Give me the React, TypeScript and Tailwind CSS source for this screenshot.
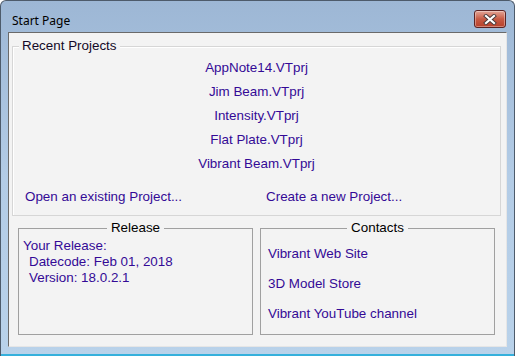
import React from 'react';

const projects = ['AppNote14.VTprj', 'Jim Beam.VTprj', 'Intensity.VTprj', 'Flat Plate.VTprj', 'Vibrant Beam.VTprj'];
const contacts = ['Vibrant Web Site', '3D Model Store', 'Vibrant YouTube channel'];

function CloseButton() {
    return (
        <div className="w-[32px] h-[18px] mt-[9px] mr-[8px] rounded-[3px] border border-[#5b2323] bg-gradient-to-b from-[#e3a597] via-[#c75a44] to-[#b7402a] flex items-center justify-center shadow-[inset_0_0_0_1px_rgba(255,255,255,0.35)]">
            <svg width="14" height="11" viewBox="0 0 14 11">
                <path d="M3 2 L11 9 M11 2 L3 9" stroke="#4a3a3a" strokeWidth="4" strokeLinecap="square" />
                <path d="M3 2 L11 9 M11 2 L3 9" stroke="#ffffff" strokeWidth="2.2" strokeLinecap="square" />
            </svg>
        </div>
    );
}

export default function App() {
    return (
        <div
            className="w-[515px] h-[356px] flex flex-col rounded-t-[6px] border border-b-0 border-[#4d5b6b] bg-gradient-to-b from-[#9db7d5] via-[#b3cce6] to-[#b9d2ea] overflow-hidden"
            style={{ fontFamily: "'Liberation Sans', Arial, sans-serif" }}
        >
            {/* title bar */}
            <div className="h-[31px] flex-none flex justify-between">
                <span className="pl-[11px] pt-[12px] text-[12px] leading-[16px] text-black" style={{ fontFamily: "'Noto Sans', sans-serif" }}>
                    Start Page
                </span>
                <CloseButton />
            </div>

            {/* client area */}
            <div className="mx-[7px] h-[315px] flex-none flex flex-col border border-t-[#6a6a6a] border-l-[#6a6a6a] border-r-[#e6e6e6] border-b-[#e6e6e6] bg-[#f3f3f3] text-[13.4px] leading-[16px]">
                {/* Recent Projects */}
                <div className="relative ml-[3px] mt-[13px] w-[489px] h-[170px] flex-none border border-[#d6d6d6] shadow-[inset_1px_1px_0_#ffffff] flex flex-col">
                    <span className="absolute left-[6px] top-[-9px] px-[3px] bg-[#f3f3f3] text-[#140a28]">Recent Projects</span>
                    <div className="pt-[9px] flex flex-col items-center text-[#330a96]">
                        {projects.map((p) => (
                            <span key={p} className="leading-[24px]">{p}</span>
                        ))}
                    </div>
                    <div className="mt-[13px] flex text-[#330a96]">
                        <span className="w-[253px] pl-[12px]">Open an existing Project...</span>
                        <span>Create a new Project...</span>
                    </div>
                </div>

                {/* Release / Contacts */}
                <div className="mt-[12px] ml-[9px] flex gap-[7px]">
                    <div className="relative w-[235px] h-[107px] border border-[#a0a0a0] pl-[4px] pt-[9px] text-[#330a96]">
                        <span className="absolute left-0 right-0 top-[-9px] flex justify-center">
                            <span className="px-[4px] bg-[#f3f3f3] text-black">Release</span>
                        </span>
                        <div>Your Release:</div>
                        <div className="ml-[6px]">Datecode: Feb 01, 2018</div>
                        <div className="ml-[6px]">Version: 18.0.2.1</div>
                    </div>
                    <div className="relative w-[235px] h-[107px] border border-[#a0a0a0] pl-[7px] pt-[17px] flex flex-col gap-[14px] text-[#330a96]">
                        <span className="absolute left-0 right-0 top-[-9px] flex justify-center">
                            <span className="px-[4px] bg-[#f3f3f3] text-black">Contacts</span>
                        </span>
                        {contacts.map((c) => (
                            <span key={c}>{c}</span>
                        ))}
                    </div>
                </div>
            </div>

            <div className="flex-1" />
            <div className="h-[2px] flex-none bg-[#35b0dc]" />
        </div>
    );
}
